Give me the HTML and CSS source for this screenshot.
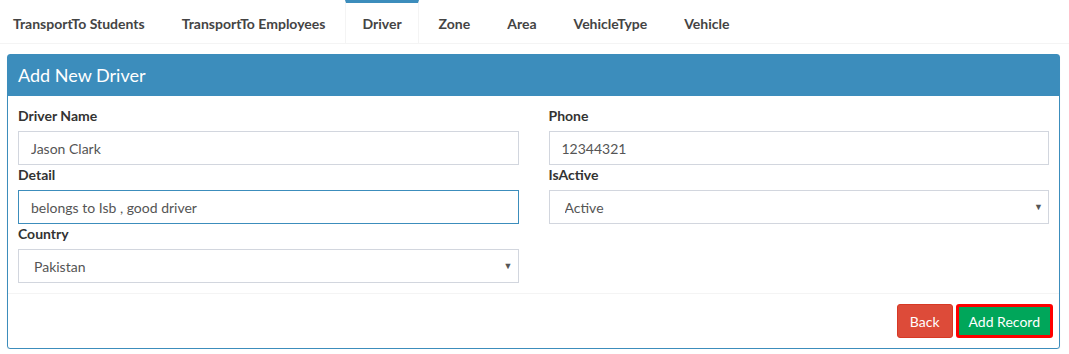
FILE: index.html
```html
<!DOCTYPE html>
<html lang="en">

<head>
    <meta charset="UTF-8">
    <meta name="viewport" content="width=device-width, initial-scale=1.0">
    <title>Add New Driver</title>
    <link rel="stylesheet" href="styles.css">
</head>

<body>
    <!-- Transport tabs -->
    <ul class="nav-tabs">
        <li><a href="#">TransportTo Students</a></li>
        <li><a href="#">TransportTo Employees</a></li>
        <li class="active"><a href="#">Driver</a></li>
        <li><a href="#">Zone</a></li>
        <li><a href="#">Area</a></li>
        <li><a href="#">VehicleType</a></li>
        <li><a href="#">Vehicle</a></li>
    </ul>

    <div class="box">
        <div class="box-header">
            <h3 class="box-title">Add New Driver</h3>
        </div>

        <div class="box-body">
            <div class="row">
                <div class="col">
                    <div class="form-group">
                        <label>Driver Name</label>
                        <input class="form-control" type="text" value="Jason Clark">
                    </div>
                    <div class="form-group">
                        <label>Detail</label>
                        <input class="form-control focused" type="text" value="belongs to Isb , good driver">
                    </div>
                    <div class="form-group">
                        <label>Country</label>
                        <div class="select-wrap">
                            <select class="form-control">
                                <option>Pakistan</option>
                            </select>
                        </div>
                    </div>
                </div>
                <div class="col">
                    <div class="form-group">
                        <label>Phone</label>
                        <input class="form-control" type="text" value="12344321">
                    </div>
                    <div class="form-group">
                        <label>IsActive</label>
                        <div class="select-wrap">
                            <select class="form-control">
                                <option>Active</option>
                            </select>
                        </div>
                    </div>
                </div>
            </div>
        </div>

        <div class="box-footer">
            <button class="btn btn-danger">Back</button>
            <button class="btn btn-success">Add Record</button>
        </div>
    </div>
</body>

</html>
```

FILE: styles.css
```css
body {
    margin: 0;
    font-family: 'Lato', sans-serif;
    font-size: 14px;
    color: #333;
    background-color: #ffffff;
}

.nav-tabs {
    display: flex;
    list-style: none;
    margin: 0 0 0 -4px;
    padding: 0;
    border-bottom: 1px solid #f4f4f4;
}

.nav-tabs li {
    margin-right: 3px;
    border-top: 3px solid transparent;
    border-left: 1px solid transparent;
    border-right: 1px solid transparent;
}

.nav-tabs li.active {
    border-top-color: #3c8dbc;
    border-left-color: #f4f4f4;
    border-right-color: #f4f4f4;
}

.nav-tabs a {
    display: block;
    padding: 1px 16px 0;
    line-height: 39px;
    font-weight: 700;
    color: #444;
    text-decoration: none;
}

.box {
    margin: 10px 9px 0 7px;
    border: 1px solid #3c8dbc;
    border-radius: 3px;
    box-shadow: 0 1px 1px rgba(0, 0, 0, 0.1);
}

.box-header {
    background-color: #3c8dbc;
    padding: 10px;
    border-bottom: 1px solid #3c8dbc;
}

.box-title {
    margin: 0;
    font-size: 18px;
    font-weight: 400;
    line-height: 20px;
    color: #ffffff;
}

.box-body {
    padding: 10px;
}

.row {
    display: grid;
    grid-template-columns: 1fr 1fr;
    column-gap: 30px;
}

.form-group label {
    display: block;
    font-weight: 700;
    line-height: 20px;
    margin-bottom: 5px;
    color: #333;
}

.form-control {
    display: block;
    box-sizing: border-box;
    width: 100%;
    height: 34px;
    padding: 6px 12px;
    font-family: inherit;
    font-size: 14px;
    color: #555;
    background-color: #fff;
    border: 1px solid #d2d6de;
    border-radius: 0;
    outline: none;
}

.form-control.focused {
    border-color: #3c8dbc;
}

.select-wrap {
    position: relative;
}

.select-wrap select {
    appearance: none;
    padding-left: 15px;
}

.select-wrap::after {
    content: "\25BC";
    position: absolute;
    right: 6px;
    top: 11px;
    font-size: 9px;
    color: #555;
    pointer-events: none;
}

.box-footer {
    display: flex;
    justify-content: flex-end;
    gap: 3px;
    padding: 10px 6px 10px 10px;
    border-top: 1px solid #f4f4f4;
}

.btn {
    height: 34px;
    padding: 6px 12px;
    font-family: inherit;
    font-size: 14px;
    color: #fff;
    border-radius: 3px;
    cursor: pointer;
}

.btn-danger {
    background-color: #dd4b39;
    border: 1px solid #d73925;
}

.btn-success {
    background-color: #00a65a;
    border: 3px solid #ff0000;
    padding: 6px 10px;
}
```
